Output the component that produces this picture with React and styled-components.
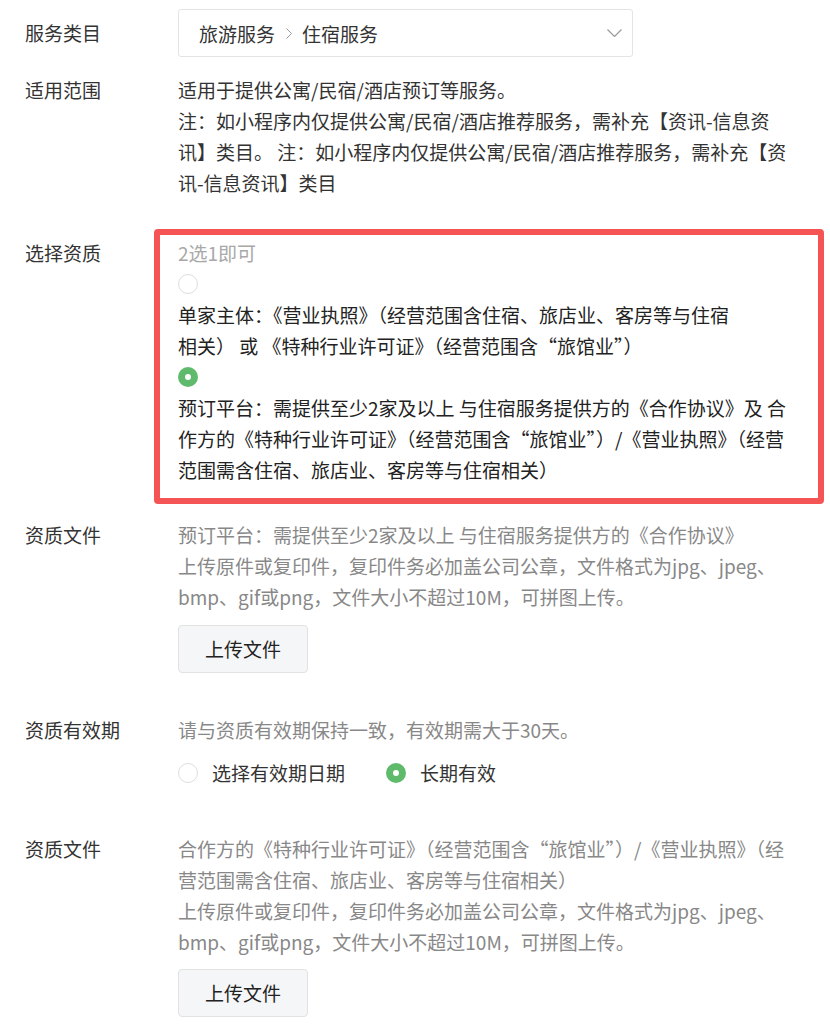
import React from "react";
import styled, { createGlobalStyle } from "styled-components";

const GlobalStyle = createGlobalStyle`
  html, body { margin: 0; padding: 0; background: #fff; }
  body {
    font-family: "Noto Sans CJK SC", "Noto Sans", sans-serif;
    font-size: 19px;
    color: #333;
    -webkit-font-smoothing: antialiased;
  }
`;

const Page = styled.div`
  width: 830px;
  padding: 9px 0 0 25px;
  box-sizing: border-box;
`;

const Row = styled.div`
  display: flex;
  align-items: flex-start;
  margin-top: ${(p) => p.$gap || 0}px;
`;

const Label = styled.div`
  width: 153px;
  flex: none;
  color: #333;
  font-size: 19px;
  line-height: ${(p) => p.$lh || 31}px;
  white-space: nowrap;
`;

const Field = styled.div`
  flex: 1;
  min-width: 0;
  padding-right: 30px;
`;

const Text = styled.div`
  font-size: 19px;
  line-height: 31px;
  color: ${(p) => p.$color || "#333"};
  white-space: nowrap;
`;

const Select = styled.div`
  width: 455px;
  height: 48px;
  box-sizing: border-box;
  border: 1px solid #e4e4e4;
  border-radius: 3px;
  display: flex;
  align-items: center;
  padding: 0 10px 0 20px;
  color: #333;
`;

const Crumb = styled.span`
  font-size: 19px;
`;

const CrumbSep = styled.svg`
  margin: 0 10px 0 11px;
  flex: none;
`;

const Chevron = styled.svg`
  margin-left: auto;
  flex: none;
`;

const Highlight = styled.div`
  margin: -8px -24px 0 -24px;
  border: 6px solid #f55454;
  border-radius: 4px;
  padding: 2px 10px 12.5px 18px;
`;

const RadioLine = styled.div`
  height: 31px;
  display: flex;
  align-items: center;
`;

const RadioCircle = styled.span`
  width: 20px;
  height: 20px;
  box-sizing: border-box;
  border-radius: 50%;
  flex: none;
  display: inline-flex;
  align-items: center;
  justify-content: center;
  border: ${(p) => (p.$checked ? "none" : "1px solid #dedede")};
  background: ${(p) => (p.$checked ? "#5fbb6b" : "#fff")};
  &::after {
    content: "";
    display: ${(p) => (p.$checked ? "block" : "none")};
    width: 6px;
    height: 6px;
    border-radius: 50%;
    background: #fff;
  }
`;

const RadioGroup = styled.div`
  display: flex;
  align-items: center;
  height: 31px;
  margin-top: 12px;
`;

const RadioOption = styled.label`
  display: inline-flex;
  align-items: center;
  margin-right: 41px;
  color: #333;
  font-size: 19px;
  line-height: 31px;
`;

const RadioText = styled.span`
  margin-left: 14px;
`;

const UploadButton = styled.button`
  display: block;
  margin-top: ${(p) => p.$gap || 12}px;
  width: 130px;
  height: 48px;
  border: 1px solid #e2e2e2;
  border-radius: 4px;
  background: #f5f6f7;
  font-family: "Noto Sans CJK SC", "Noto Sans", sans-serif;
  font-size: 19px;
  color: #222;
  padding: 0;
  cursor: pointer;
`;

const Radio = ({ checked }) => <RadioCircle $checked={checked} />;

export default function App() {
  return (
    <>
      <GlobalStyle />
      <Page>
        <Row>
          <Label $lh={48}>服务类目</Label>
          <Field>
            <Select>
              <Crumb>旅游服务</Crumb>
              <CrumbSep width="6" height="11" viewBox="0 0 6 11">
                <path d="M0.5 0.5 L5.5 5.5 L0.5 10.5" fill="none" stroke="#9a9a9a" strokeWidth="1" />
              </CrumbSep>
              <Crumb>住宿服务</Crumb>
              <Chevron width="15" height="8" viewBox="0 0 15 8">
                <path d="M0.5 0.5 L7.5 7.5 L14.5 0.5" fill="none" stroke="#9a9a9a" strokeWidth="1.2" />
              </Chevron>
            </Select>
          </Field>
        </Row>

        <Row $gap={17}>
          <Label>适用范围</Label>
          <Field>
            <Text>适用于提供公寓/民宿/酒店预订等服务。</Text>
            <Text>注：如小程序内仅提供公寓/民宿/酒店推荐服务，需补充【资讯-信息资</Text>
            <Text>讯】类目。 注：如小程序内仅提供公寓/民宿/酒店推荐服务，需补充【资</Text>
            <Text>讯-信息资讯】类目</Text>
          </Field>
        </Row>

        <Row $gap={39}>
          <Label>选择资质</Label>
          <Field>
            <Highlight>
              <Text $color="#a8a8a8">2选1即可</Text>
              <RadioLine>
                <Radio />
              </RadioLine>
              <Text $color="#222">单家主体：《营业执照》（经营范围含住宿、旅店业、客房等与住宿</Text>
              <Text $color="#222">相关） 或 《特种行业许可证》（经营范围含“旅馆业”）</Text>
              <RadioLine>
                <Radio checked />
              </RadioLine>
              <Text $color="#222">预订平台：需提供至少2家及以上 与住宿服务提供方的《合作协议》及 合</Text>
              <Text $color="#222">作方的《特种行业许可证》（经营范围含“旅馆业”）/《营业执照》（经营</Text>
              <Text $color="#222">范围需含住宿、旅店业、客房等与住宿相关）</Text>
            </Highlight>
          </Field>
        </Row>

        <Row $gap={15.5}>
          <Label>资质文件</Label>
          <Field>
            <Text $color="#888">预订平台：需提供至少2家及以上 与住宿服务提供方的《合作协议》</Text>
            <Text $color="#888">上传原件或复印件，复印件务必加盖公司公章，文件格式为jpg、jpeg、</Text>
            <Text $color="#888">bmp、gif或png，文件大小不超过10M，可拼图上传。</Text>
            <UploadButton $gap={12.5}>上传文件</UploadButton>
          </Field>
        </Row>

        <Row $gap={41.5}>
          <Label>资质有效期</Label>
          <Field>
            <Text $color="#888">请与资质有效期保持一致，有效期需大于30天。</Text>
            <RadioGroup>
              <RadioOption>
                <Radio />
                <RadioText>选择有效期日期</RadioText>
              </RadioOption>
              <RadioOption>
                <Radio checked />
                <RadioText>长期有效</RadioText>
              </RadioOption>
            </RadioGroup>
          </Field>
        </Row>

        <Row $gap={45}>
          <Label>资质文件</Label>
          <Field>
            <Text $color="#888">合作方的《特种行业许可证》（经营范围含“旅馆业”）/《营业执照》（经</Text>
            <Text $color="#888">营范围需含住宿、旅店业、客房等与住宿相关）</Text>
            <Text $color="#888">上传原件或复印件，复印件务必加盖公司公章，文件格式为jpg、jpeg、</Text>
            <Text $color="#888">bmp、gif或png，文件大小不超过10M，可拼图上传。</Text>
            <UploadButton $gap={11.5}>上传文件</UploadButton>
          </Field>
        </Row>
      </Page>
    </>
  );
}
